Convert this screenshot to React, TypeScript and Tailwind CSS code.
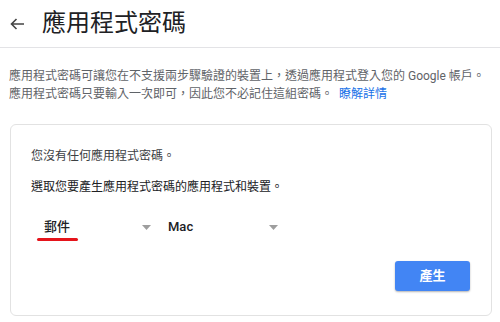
import React from 'react';

const font = { fontFamily: 'Roboto, "Noto Sans CJK TC", sans-serif' };

const Caret = () => (
  <svg width="9" height="5" viewBox="0 0 9 5" className="shrink-0">
    <path d="M0 0h9L4.5 5z" fill="#9e9e9e" />
  </svg>
);

export default function App() {
  return (
    <div className="w-[500px] h-[322px] bg-white overflow-hidden" style={font}>
      <header className="h-[48px] flex items-center border-b border-[#e3e3e6]">
        <button className="ml-[10px] w-[14px] h-[14px] flex items-center justify-center">
          <svg width="14" height="12" viewBox="0 0 14 12" fill="none" stroke="#444" strokeWidth="1.6">
            <path d="M14 6H1.5M6.5 1L1.5 6l5 5" />
          </svg>
        </button>
        <h1 className="ml-[18px] text-[24px] leading-[30px] text-[#202124] -mt-[2px]">應用程式密碼</h1>
      </header>

      <p className="mt-[19px] ml-[9px] pr-2 text-[12px] leading-[18px] text-[#5f6368]">
        應用程式密碼可讓您在不支援兩步驟驗證的裝置上，透過應用程式登入您的 Google 帳戶。
        <br />
        應用程式密碼只要輸入一次即可，因此您不必記住這組密碼。
        <a className="ml-[6px] text-[#1a73e8]">瞭解詳情</a>
      </p>

      <div className="mt-[21px] mx-[10px] w-[482px] h-[192px] border border-[#e2e2e2] rounded-[6px] px-[20px] pt-[22px] pb-[24px] flex flex-col">
        <p className="text-[12px] leading-[18px] text-[#3c4043]">您沒有任何應用程式密碼。</p>
        <p className="mt-[13px] text-[12px] leading-[18px] text-[#202124]">選取您要產生應用程式密碼的應用程式和裝置。</p>

        <div className="mt-[16px] ml-[6px] flex gap-[10px]">
          <div className="relative w-[114px] h-[30px] pl-[7px] flex items-center justify-between">
            <span className="text-[13px] font-medium text-[#202124]">郵件</span>
            <Caret />
            <span className="absolute left-0 top-[26px] w-[41px] h-[3px] rounded-full bg-[#e5141b]" />
          </div>
          <div className="w-[117px] h-[30px] pl-[7px] flex items-center justify-between">
            <span className="text-[13px] font-medium text-[#202124]">Mac</span>
            <Caret />
          </div>
        </div>

        <div className="mt-auto flex justify-end pr-[1px]">
          <button className="w-[75px] h-[30px] rounded-[3px] bg-[#4285f4] text-white text-[13px] font-semibold shadow-[0_1px_2px_rgba(0,0,0,0.3)]">
            產生
          </button>
        </div>
      </div>
    </div>
  );
}
